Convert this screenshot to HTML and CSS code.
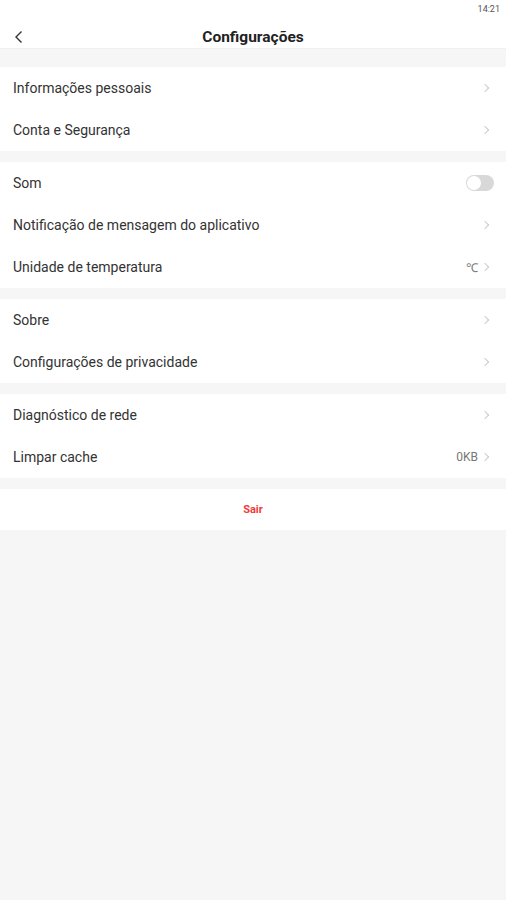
FILE: index.html
```html
<!DOCTYPE html>
<html lang="pt">
<head>
    <meta charset="UTF-8">
    <meta name="viewport" content="width=device-width, initial-scale=1.0">
    <title>Configurações</title>
    <link rel="stylesheet" href="styles.css">
</head>
<body>
    <!-- Barra de status -->
    <div class="status-bar">14:21</div>

    <!-- Cabeçalho -->
    <div class="header">
        <span class="back">
            <svg width="10" height="14" viewBox="0 0 10 14"><path d="M7.5 1.5 L2 7 L7.5 12.5" fill="none" stroke="#333" stroke-width="1.4"/></svg>
        </span>
        <h1>Configurações</h1>
    </div>

    <div class="group">
        <div class="row"><span class="label">Informações pessoais</span><span class="arrow"></span></div>
        <div class="row"><span class="label">Conta e Segurança</span><span class="arrow"></span></div>
    </div>

    <div class="group">
        <div class="row"><span class="label">Som</span><span class="switch"><span class="knob"></span></span></div>
        <div class="row"><span class="label">Notificação de mensagem do aplicativo</span><span class="arrow"></span></div>
        <div class="row"><span class="label">Unidade de temperatura</span><span class="value">℃</span><span class="arrow"></span></div>
    </div>

    <div class="group">
        <div class="row"><span class="label">Sobre</span><span class="arrow"></span></div>
        <div class="row"><span class="label">Configurações de privacidade</span><span class="arrow"></span></div>
    </div>

    <div class="group">
        <div class="row"><span class="label">Diagnóstico de rede</span><span class="arrow"></span></div>
        <div class="row"><span class="label">Limpar cache</span><span class="value">0KB</span><span class="arrow"></span></div>
    </div>

    <div class="logout">Sair</div>
</body>
</html>
```

FILE: styles.css
```css
/* Estilos gerais */
body {
    font-family: Roboto, "Noto Sans", sans-serif;
    background-color: #f6f6f6;
    margin: 0;
    padding: 0;
    min-height: 100vh;
    color: #333;
}

.status-bar {
    height: 18px;
    background-color: #fff;
    font-size: 9px;
    color: #555;
    text-align: right;
    padding-right: 6px;
    line-height: 18px;
}

/* Cabeçalho */
.header {
    height: 30px;
    background-color: #fff;
    border-bottom: 1px solid #f0f0f0;
    display: flex;
    align-items: center;
    justify-content: center;
    position: relative;
}

.header h1 {
    margin: 0;
    font-size: 15.5px;
    font-weight: bold;
    color: #222;
    padding-top: 7px;
}

.back {
    position: absolute;
    left: 14px;
    top: 12px;
    display: flex;
}

/* Grupos */
.group {
    background-color: #fff;
    margin-top: 11px;
}

.header + .group {
    margin-top: 18px;
}

.row {
    height: 42px;
    display: flex;
    align-items: center;
    padding: 0 12px 0 13px;
}

.label {
    flex: 1;
    font-size: 14px;
    color: #333;
}

.value {
    font-size: 12px;
    color: #777;
    margin-right: 4px;
}

.arrow {
    width: 5px;
    height: 5px;
    border-top: 1px solid #ccc;
    border-right: 1px solid #ccc;
    transform: rotate(45deg);
    margin-right: 6px;
}

/* Interruptor */
.switch {
    width: 28px;
    height: 16px;
    border-radius: 8px;
    background-color: #d8d8d8;
    display: flex;
    align-items: center;
    padding: 0 1px;
    box-sizing: border-box;
}

.knob {
    width: 14px;
    height: 14px;
    border-radius: 50%;
    background-color: #fff;
}

/* Sair */
.logout {
    background-color: #fff;
    margin-top: 11px;
    height: 41px;
    line-height: 41px;
    text-align: center;
    font-size: 11px;
    font-weight: bold;
    color: #f03a3a;
}
```
